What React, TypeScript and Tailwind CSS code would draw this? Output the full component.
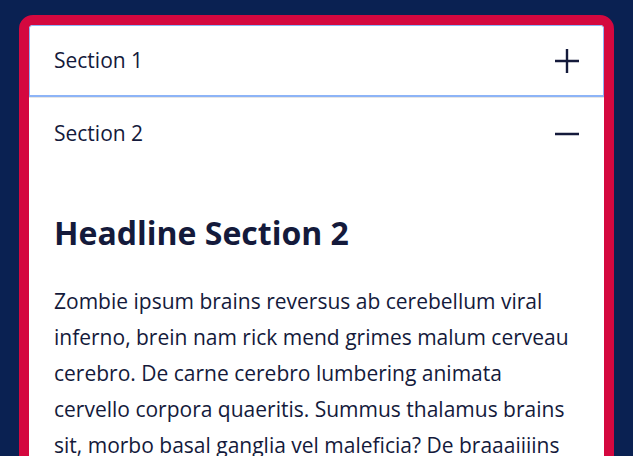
import { useState } from 'react';

const sections = [
  {
    title: 'Section 1',
    headline: 'Headline Section 1',
    body: 'Zombie ipsum brains reversus ab cerebellum viral inferno, brein nam rick mend grimes malum cerveau cerebro.',
  },
  {
    title: 'Section 2',
    headline: 'Headline Section 2',
    body: 'Zombie ipsum brains reversus ab cerebellum viral inferno, brein nam rick mend grimes malum cerveau cerebro. De carne cerebro lumbering animata cervello corpora quaeritis. Summus thalamus brains sit, morbo basal ganglia vel maleficia? De braaaiiiins apocalypsi gorger omero undead survivor dictum mauris.',
  },
];

export default function App() {
  const [open, setOpen] = useState(1);

  return (
    <div className="min-h-screen bg-[#0a2152] px-[19px] pt-[15px] font-['Open_Sans',sans-serif] text-[#141a3b]">
      <div className="overflow-hidden rounded-[14px] border-[10px] border-[#d4083f] bg-white">
        {sections.map((s, i) => (
          <div key={s.title} className="border-b border-[#e6e6e6]">
            <button
              onClick={() => setOpen(open === i ? -1 : i)}
              className={`flex h-[72px] w-full items-center justify-between px-[25px] text-left text-[21px] ${i === 0 ? 'rounded-t-[3px] border border-b-2 border-[#8db4f7] pl-[24px] pr-[24px]' : ''}`}
            >
              <span>{s.title}</span>
              <svg width="26" height="26" viewBox="0 0 26 26" className="mr-[-1px]">
                <path d="M1 13h24" stroke="#141a3b" strokeWidth="2.4" />
                {open !== i && <path d="M13 1v24" stroke="#141a3b" strokeWidth="2.4" />}
              </svg>
            </button>
            {open === i && (
              <div className="pb-6 pl-[25px] pr-[24px] pt-[42px]">
                <h2 className="mb-[29px] text-[32px] font-bold leading-[42px]">{s.headline}</h2>
                <p className="text-[21px] leading-[36px]">{s.body}</p>
              </div>
            )}
          </div>
        ))}
      </div>
    </div>
  );
}
